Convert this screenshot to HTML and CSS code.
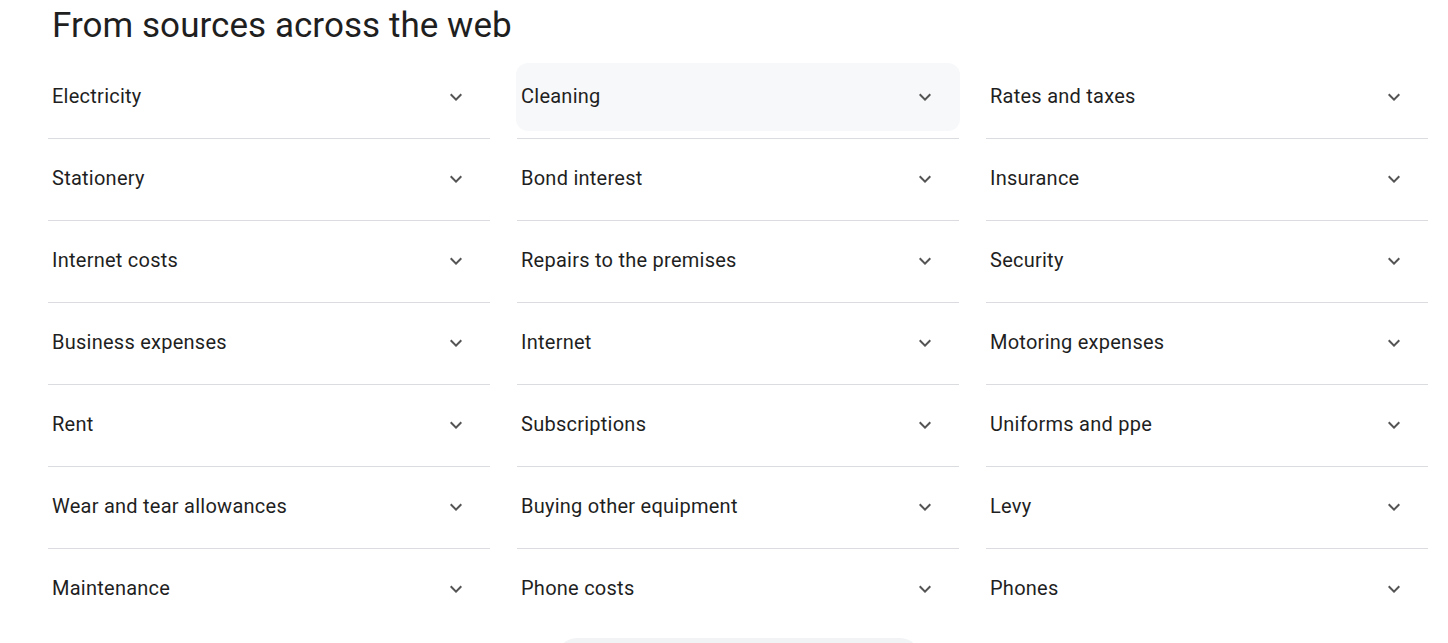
FILE: index.html
```html
<!DOCTYPE html>
<html lang="en">
<head>
<meta charset="utf-8">
<title>From sources across the web</title>
<link rel="stylesheet" href="styles.css">
</head>
<body>
<div class="page">
  <h2 class="title">From sources across the web</h2>
  <div class="grid">
    <div class="col">
      <div class="cell"><div class="row"><span class="label">Electricity</span><svg class="chev" viewBox="0 0 24 24"><path d="M16.59 8.59L12 13.17 7.41 8.59 6 10l6 6 6-6z"/></svg></div></div>
      <div class="cell"><div class="row"><span class="label">Stationery</span><svg class="chev" viewBox="0 0 24 24"><path d="M16.59 8.59L12 13.17 7.41 8.59 6 10l6 6 6-6z"/></svg></div></div>
      <div class="cell"><div class="row"><span class="label">Internet costs</span><svg class="chev" viewBox="0 0 24 24"><path d="M16.59 8.59L12 13.17 7.41 8.59 6 10l6 6 6-6z"/></svg></div></div>
      <div class="cell"><div class="row"><span class="label">Business expenses</span><svg class="chev" viewBox="0 0 24 24"><path d="M16.59 8.59L12 13.17 7.41 8.59 6 10l6 6 6-6z"/></svg></div></div>
      <div class="cell"><div class="row"><span class="label">Rent</span><svg class="chev" viewBox="0 0 24 24"><path d="M16.59 8.59L12 13.17 7.41 8.59 6 10l6 6 6-6z"/></svg></div></div>
      <div class="cell"><div class="row"><span class="label">Wear and tear allowances</span><svg class="chev" viewBox="0 0 24 24"><path d="M16.59 8.59L12 13.17 7.41 8.59 6 10l6 6 6-6z"/></svg></div></div>
      <div class="cell last"><div class="row"><span class="label">Maintenance</span><svg class="chev" viewBox="0 0 24 24"><path d="M16.59 8.59L12 13.17 7.41 8.59 6 10l6 6 6-6z"/></svg></div></div>
    </div>
    <div class="col">
      <div class="cell"><div class="row hover"><span class="label">Cleaning</span><svg class="chev" viewBox="0 0 24 24"><path d="M16.59 8.59L12 13.17 7.41 8.59 6 10l6 6 6-6z"/></svg></div></div>
      <div class="cell"><div class="row"><span class="label">Bond interest</span><svg class="chev" viewBox="0 0 24 24"><path d="M16.59 8.59L12 13.17 7.41 8.59 6 10l6 6 6-6z"/></svg></div></div>
      <div class="cell"><div class="row"><span class="label">Repairs to the premises</span><svg class="chev" viewBox="0 0 24 24"><path d="M16.59 8.59L12 13.17 7.41 8.59 6 10l6 6 6-6z"/></svg></div></div>
      <div class="cell"><div class="row"><span class="label">Internet</span><svg class="chev" viewBox="0 0 24 24"><path d="M16.59 8.59L12 13.17 7.41 8.59 6 10l6 6 6-6z"/></svg></div></div>
      <div class="cell"><div class="row"><span class="label">Subscriptions</span><svg class="chev" viewBox="0 0 24 24"><path d="M16.59 8.59L12 13.17 7.41 8.59 6 10l6 6 6-6z"/></svg></div></div>
      <div class="cell"><div class="row"><span class="label">Buying other equipment</span><svg class="chev" viewBox="0 0 24 24"><path d="M16.59 8.59L12 13.17 7.41 8.59 6 10l6 6 6-6z"/></svg></div></div>
      <div class="cell last"><div class="row"><span class="label">Phone costs</span><svg class="chev" viewBox="0 0 24 24"><path d="M16.59 8.59L12 13.17 7.41 8.59 6 10l6 6 6-6z"/></svg></div></div>
    </div>
    <div class="col">
      <div class="cell"><div class="row"><span class="label">Rates and taxes</span><svg class="chev" viewBox="0 0 24 24"><path d="M16.59 8.59L12 13.17 7.41 8.59 6 10l6 6 6-6z"/></svg></div></div>
      <div class="cell"><div class="row"><span class="label">Insurance</span><svg class="chev" viewBox="0 0 24 24"><path d="M16.59 8.59L12 13.17 7.41 8.59 6 10l6 6 6-6z"/></svg></div></div>
      <div class="cell"><div class="row"><span class="label">Security</span><svg class="chev" viewBox="0 0 24 24"><path d="M16.59 8.59L12 13.17 7.41 8.59 6 10l6 6 6-6z"/></svg></div></div>
      <div class="cell"><div class="row"><span class="label">Motoring expenses</span><svg class="chev" viewBox="0 0 24 24"><path d="M16.59 8.59L12 13.17 7.41 8.59 6 10l6 6 6-6z"/></svg></div></div>
      <div class="cell"><div class="row"><span class="label">Uniforms and ppe</span><svg class="chev" viewBox="0 0 24 24"><path d="M16.59 8.59L12 13.17 7.41 8.59 6 10l6 6 6-6z"/></svg></div></div>
      <div class="cell"><div class="row"><span class="label">Levy</span><svg class="chev" viewBox="0 0 24 24"><path d="M16.59 8.59L12 13.17 7.41 8.59 6 10l6 6 6-6z"/></svg></div></div>
      <div class="cell last"><div class="row"><span class="label">Phones</span><svg class="chev" viewBox="0 0 24 24"><path d="M16.59 8.59L12 13.17 7.41 8.59 6 10l6 6 6-6z"/></svg></div></div>
    </div>
  </div>
  <div class="more-wrap"><div class="more"></div></div>
</div>
</body>
</html>
```

FILE: styles.css
```css
html, body {
  margin: 0;
  padding: 0;
  background: #ffffff;
  overflow: hidden;
}
body {
  font-family: Roboto, "Liberation Sans", Arial, sans-serif;
  color: #1f1f1f;
}
.page {
  width: 1380px;
  padding: 0 20px 0 48px;
}
.title {
  margin: 0;
  height: 57px;
  padding-left: 4px;
  font-size: 35px;
  font-weight: 400;
  line-height: 52px;
  color: #1f1f1f;
  letter-spacing: 0.05px;
}
.grid {
  display: grid;
  grid-template-columns: 442px 442px 442px;
  column-gap: 27px;
}
.cell {
  padding: 6px 0;
  height: 69px;
  border-bottom: 1px solid #dadce0;
}
.cell.last {
  border-bottom: none;
  height: 70px;
}
.row {
  height: 68px;
  display: flex;
  align-items: center;
  justify-content: space-between;
  padding: 0 22px 0 4px;
  border-radius: 12px;
}
.row.hover {
  background: #f7f8f9;
  margin: 0 -1px;
  padding: 0 23px 0 5px;
}
.label {
  font-size: 20px;
  line-height: 24px;
  padding-bottom: 2px;
  letter-spacing: 0.25px;
}
.chev {
  width: 24px;
  height: 24px;
  fill: #545454;
  flex: none;
}
.more-wrap {
  display: flex;
  justify-content: center;
  padding-top: 7px;
}
.more {
  width: 363px;
  height: 40px;
  background: #f1f3f4;
  border-radius: 20px;
}
```
